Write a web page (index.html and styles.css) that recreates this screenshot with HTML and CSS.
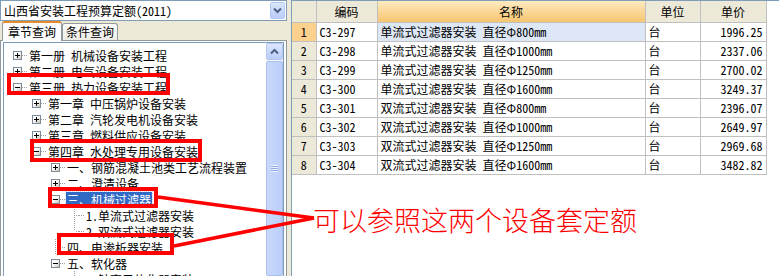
FILE: index.html
```html
<!DOCTYPE html>
<html>
<head>
<meta charset="utf-8">
<link rel="stylesheet" href="styles.css">
</head>
<body>
<div class="app">

  <!-- left: quota book + chapter tree -->
  <div class="side">
    <div class="combo">
      <span class="combo-text">山西省安装工程预算定额(2011)</span>
      <span class="xp-btn"><svg width="9" height="7" viewBox="0 0 9 7"><path d="M1 1.5 L4.5 5 L8 1.5" fill="none" stroke="#4D6185" stroke-width="2"/></svg></span>
    </div>
    <div class="tabs">
      <div class="tab on">章节查询</div>
      <div class="tab">条件查询</div>
    </div>
    <div class="page">
      <div class="tree">
        <ul class="nodes">
          <li class="node l0"><i class="box plus"></i><i class="twig"></i><span class="label">第一册 机械设备安装工程</span></li>
          <li class="node l0"><i class="box plus"></i><i class="twig"></i><span class="label">第二册 电气设备安装工程</span></li>
          <li class="node l0"><i class="box"></i><i class="twig"></i><span class="label">第三册 热力设备安装工程</span></li>
          <li class="node l1"><i class="box plus"></i><i class="twig"></i><span class="label">第一章 中压锅炉设备安装</span></li>
          <li class="node l1"><i class="box plus"></i><i class="twig"></i><span class="label">第二章 汽轮发电机设备安装</span></li>
          <li class="node l1"><i class="box plus"></i><i class="twig"></i><span class="label">第三章 燃料供应设备安装</span></li>
          <li class="node l1"><i class="box"></i><i class="twig"></i><span class="label">第四章 水处理专用设备安装</span></li>
          <li class="node l2"><i class="box plus"></i><i class="twig"></i><span class="label">一、钢筋混凝土池类工艺流程装置</span></li>
          <li class="node l2"><i class="box plus"></i><i class="twig"></i><span class="label">二、澄清设备</span></li>
          <li class="node l2 sel"><i class="box"></i><i class="twig"></i><span class="label">三、机械过滤器</span></li>
          <li class="node l3"><i class="leaf"></i><i class="twig"></i><span class="label">1.单流式过滤器安装</span></li>
          <li class="node l3"><i class="leaf last"></i><i class="twig"></i><span class="label">2.双流式过滤器安装</span></li>
          <li class="node l2"><i class="leaf"></i><i class="twig"></i><span class="label">四、电渗析器安装</span></li>
          <li class="node l2"><i class="box"></i><i class="twig"></i><span class="label">五、软化器</span></li>
          <li class="node l3"><i class="leaf"></i><i class="twig"></i><span class="label">1.钠离子软化器安装</span></li>
        </ul>
        <div class="vscroll">
          <span class="xp-btn up"><svg width="9" height="7" viewBox="0 0 9 7"><path d="M1 5.5 L4.5 2 L8 5.5" fill="none" stroke="#4D6185" stroke-width="2"/></svg></span>
          <div class="thumb"><i class="grip"></i></div>
        </div>
      </div>
    </div>
  </div>

  <div class="split"></div>

  <!-- right: quota items -->
  <div class="grid">
    <table>
      <colgroup>
        <col class="c-no"><col class="c-code"><col class="c-name"><col class="c-unit"><col class="c-price">
      </colgroup>
      <thead>
        <tr><th class="no"></th><th>编码</th><th class="hot">名称</th><th>单位</th><th>单价</th></tr>
      </thead>
      <tbody>
        <tr><td class="no cur">1</td><td>C3-297</td><td class="picked">单流式过滤器安装 直径Φ800mm</td><td>台</td><td class="num">1996.25</td></tr>
        <tr><td class="no">2</td><td>C3-298</td><td>单流式过滤器安装 直径Φ1000mm</td><td>台</td><td class="num">2337.06</td></tr>
        <tr><td class="no">3</td><td>C3-299</td><td>单流式过滤器安装 直径Φ1250mm</td><td>台</td><td class="num">2700.02</td></tr>
        <tr><td class="no">4</td><td>C3-300</td><td>单流式过滤器安装 直径Φ1600mm</td><td>台</td><td class="num">3249.37</td></tr>
        <tr><td class="no">5</td><td>C3-301</td><td>双流式过滤器安装 直径Φ800mm</td><td>台</td><td class="num">2396.07</td></tr>
        <tr><td class="no">6</td><td>C3-302</td><td>双流式过滤器安装 直径Φ1000mm</td><td>台</td><td class="num">2649.97</td></tr>
        <tr><td class="no">7</td><td>C3-303</td><td>双流式过滤器安装 直径Φ1250mm</td><td>台</td><td class="num">2969.68</td></tr>
        <tr><td class="no">8</td><td>C3-304</td><td>双流式过滤器安装 直径Φ1600mm</td><td>台</td><td class="num">3482.82</td></tr>
      </tbody>
    </table>
  </div>

  <!-- red markup drawn over the screenshot -->
  <svg class="marks" width="779" height="276" viewBox="0 0 779 276">
    <g fill="none" stroke="#FF0000" stroke-width="4">
      <rect x="9" y="75" width="159" height="18"/>
      <rect x="32" y="141" width="168" height="19"/>
      <rect x="50" y="189" width="106" height="17"/>
      <rect x="59" y="235" width="113" height="18"/>
    </g>
    <g stroke="#FF0000" stroke-width="3.5">
      <line x1="158" y1="197" x2="314" y2="218"/>
      <line x1="174" y1="246" x2="314" y2="218"/>
    </g>
    <text class="note" x="313" y="231">可以参照这两个设备套定额</text>
  </svg>

</div>
</body>
</html>
```

FILE: styles.css
```css
* {
  box-sizing: border-box;
}

body {
  margin: 0;
  font: 12px "Noto Sans Mono CJK SC", "Noto Sans CJK SC", monospace;
  color: #000;
  background: #ECE9D8;
}

.app {
  position: relative;
  display: flex;
  width: 779px;
  height: 276px;
  overflow: hidden;
}

/* ---------- left side ---------- */
.side {
  width: 287px;
  display: flex;
  flex-direction: column;
}

.combo {
  height: 21px;
  display: flex;
  align-items: center;
  padding-left: 3px;
  background: #fff;
  border: 1px solid #7F9DB9;
}
.combo-text {
  flex: 1;
}

/* the little xp blue buttons (dropdown, scroll up) */
.xp-btn {
  width: 15px;
  height: 17px;
  margin-right: 1px;
  display: flex;
  align-items: center;
  justify-content: center;
  background: linear-gradient(#DCE6FE, #B9CDF9);
  border: 1px solid #B4C8F4;
  border-radius: 2px;
}

.tabs {
  height: 19px;
  display: flex;
  align-items: flex-end;
  padding-left: 2px;
}
.tab {
  height: 17px;
  padding: 0 3px;
  line-height: 16px;
  border: 1px solid #919B9C;
  border-bottom: none;
  border-radius: 3px 3px 0 0;
  background: linear-gradient(#FFFFFF, #ECEBE5);
}
.tab.on {
  height: 20px;
  padding: 0 5px;
  margin-bottom: -1px;
  line-height: 17px;
  border-top: 2px solid #E68B2C;
  background: #FCFCFE;
  position: relative;
  z-index: 1;
}

.page {
  flex: 1;
  min-height: 0;
  padding: 1px 2px 0;
  border: 1px solid #919B9C;
  border-bottom: none;
  background: #FCFCFE;
}

.tree {
  height: 100%;
  display: flex;
  background: #fff;
  border: 1px solid #7F9DB9;
  border-bottom: none;
}

.nodes {
  flex: 1;
  margin: 0;
  padding: 4px 0 0;
  list-style: none;
  overflow: hidden;
}

.node {
  height: 16px;
  display: flex;
  align-items: center;
  white-space: nowrap;
}
.l0 { padding-left: 9px; }
.l1 { padding-left: 28px; }
.l2 { padding-left: 47px; }
.l3 { padding-left: 66px; }

/* expander box: minus by default, .plus adds the upright */
.box {
  width: 9px;
  height: 9px;
  position: relative;
  border: 1px solid #7A8A99;
  background: linear-gradient(135deg, #FFFFFF 40%, #C8C8BC);
}
.box::before {
  content: "";
  position: absolute;
  left: 1px;
  top: 3px;
  width: 5px;
  height: 1px;
  background: #000;
}
.box.plus::after {
  content: "";
  position: absolute;
  left: 3px;
  top: 1px;
  width: 1px;
  height: 5px;
  background: #000;
}

.twig {
  width: 6px;
  height: 1px;
  background: linear-gradient(to right, #A0A0A0 50%, transparent 50%) 0 0 / 2px 1px repeat-x;
}

.leaf {
  width: 9px;
  height: 16px;
  position: relative;
}
.leaf::before {
  content: "";
  position: absolute;
  left: 4px;
  top: 0;
  width: 1px;
  height: 16px;
  background: linear-gradient(#A0A0A0 50%, transparent 50%) 0 0 / 1px 2px repeat-y;
}
.leaf.last::before {
  height: 8px;
}
.leaf::after {
  content: "";
  position: absolute;
  left: 5px;
  top: 8px;
  width: 4px;
  height: 1px;
  background: linear-gradient(to right, transparent 50%, #A0A0A0 50%) 0 0 / 2px 1px repeat-x;
}

.label {
  padding: 0 1px;
  line-height: 15px;
}
.sel .label {
  color: #fff;
  background: #316AC5;
  outline: 1px dotted #C9D6EE;
}

.vscroll {
  width: 17px;
  display: flex;
  flex-direction: column;
  background: #F4F3EE;
}
.vscroll .up {
  width: 17px;
  height: 17px;
  margin: 0;
}
.thumb {
  flex: 1;
  margin-top: 1px;
  display: flex;
  align-items: center;
  justify-content: center;
  background: linear-gradient(to right, #C9D8FC, #BBCEFA);
  border: 1px solid #A9BFF2;
  border-radius: 2px;
}
.grip {
  width: 7px;
  height: 7px;
  background: linear-gradient(#EEF4FE 50%, #8FA9E0 50%) 0 0 / 7px 2px repeat-y;
}

.split {
  width: 4px;
}

/* ---------- right side: table ---------- */
.grid {
  flex: 1;
  background: #fff;
  border-top: 1px solid #7F9DB9;
  border-left: 1px solid #7F9DB9;
}

table {
  border-collapse: collapse;
  table-layout: fixed;
}
.c-no { width: 24px; }
.c-code { width: 61px; }
.c-name { width: 268px; }
.c-unit { width: 55px; }
.c-price { width: 66px; }

th, td {
  padding: 0 3px;
  border: 1px solid #C0C0C0;
  white-space: nowrap;
  overflow: hidden;
}
th {
  height: 21px;
  font-weight: normal;
  text-align: center;
  background: #ECE9D8;
  border-top: none;
}
th.hot {
  background: linear-gradient(#FDEAC0, #F6C56F);
}
td {
  height: 19px;
}
th:first-child, td:first-child {
  border-left: none;
}

td.no {
  padding: 0;
  text-align: center;
  background: #ECE9D8;
}
td.no.cur {
  background: #FCD18E;
}
td.picked {
  background: #DDE7F5;
}
td.num {
  text-align: right;
}

/* ---------- markup overlay ---------- */
.marks {
  position: absolute;
  left: 0;
  top: 0;
  pointer-events: none;
}
.note {
  font-family: "Noto Sans CJK SC", sans-serif;
  font-size: 27px;
  font-weight: 300;
  fill: #FF0000;
}
```
